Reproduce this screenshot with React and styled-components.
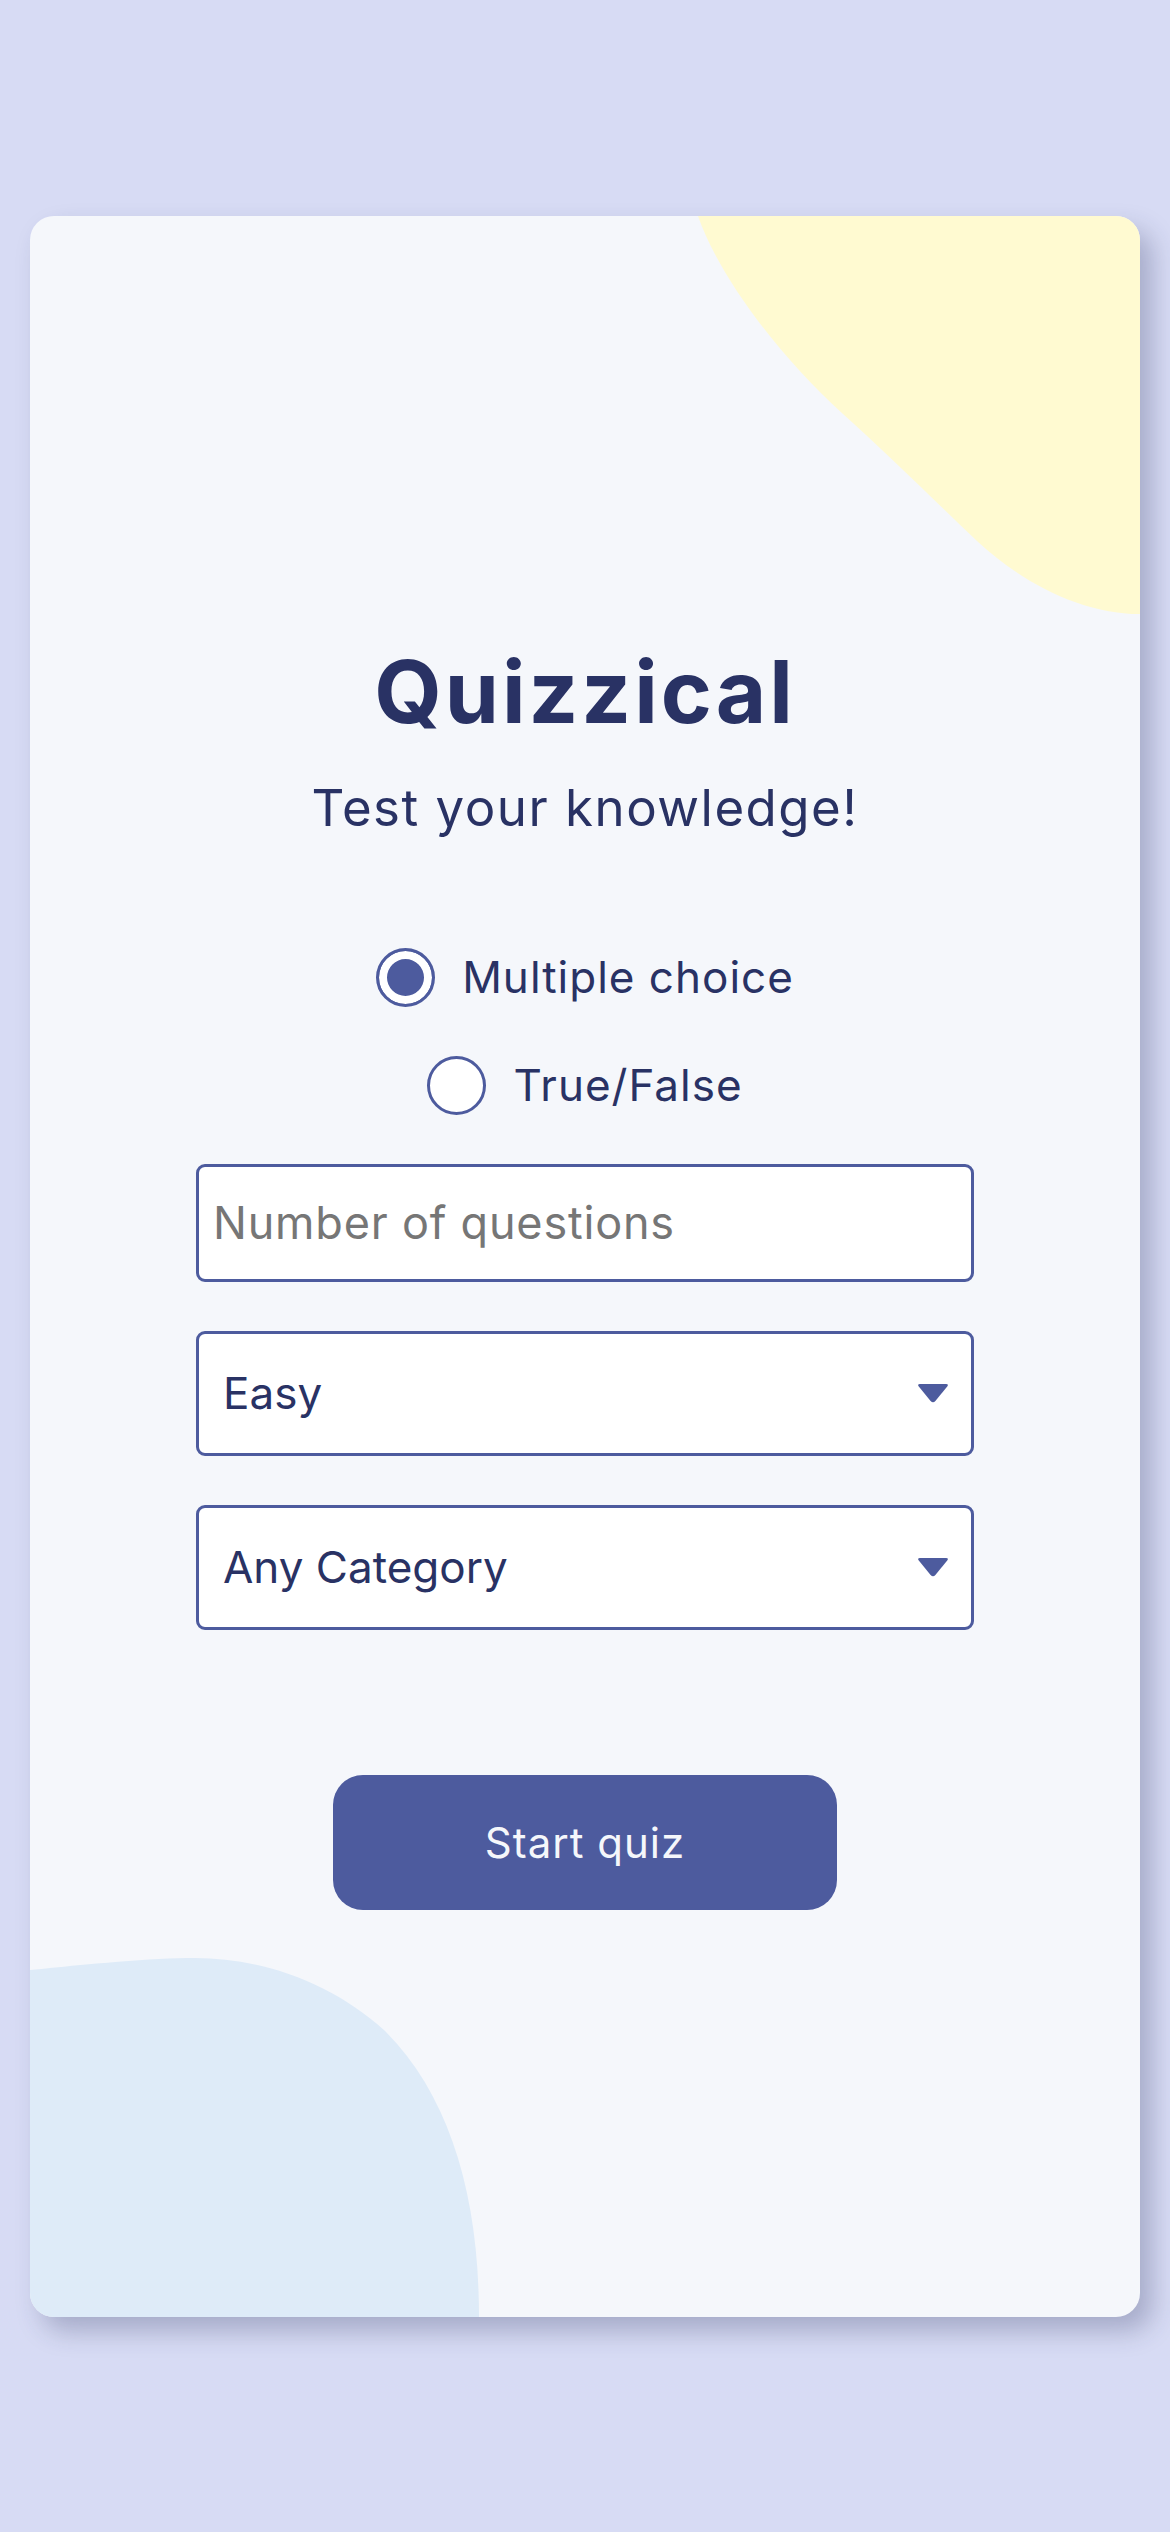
import React, { useState } from 'react';
import styled, { createGlobalStyle } from 'styled-components';

const colors = {
    PAGE: '#D7DBF4',
    CARD: '#F5F7FB',
    NAVY: '#293264',
    ACCENT: '#4D5B9E',
    YELLOW: '#FFFAD1',
    BLUE: '#DEEBF8',
    PLACEHOLDER: '#767676',
    WHITE: '#FFFFFF',
};

const GlobalStyle = createGlobalStyle`
    html, body {
        margin: 0;
        padding: 0;
        background: ${colors.PAGE};
    }
    * {
        box-sizing: border-box;
    }
`;

const Page = styled.div`
    min-height: 2532px;
    display: flex;
    align-items: center;
    justify-content: center;
    font-family: Inter, 'Liberation Sans', sans-serif;
`;

const Card = styled.main`
    position: relative;
    width: 1110px;
    height: 2101px;
    border-radius: 24px;
    background: ${colors.CARD};
    overflow: hidden;
    box-shadow: 12px 14px 26px rgba(40, 46, 90, 0.28);
`;

const Blobs = styled.svg`
    position: absolute;
    inset: 0;
    width: 100%;
    height: 100%;
    pointer-events: none;
`;

const Content = styled.div`
    position: relative;
    display: flex;
    flex-direction: column;
    align-items: center;
    padding-top: 432px;
`;

const Title = styled.h1`
    margin: 0;
    font-size: 87px;
    line-height: 88px;
    font-weight: 700;
    letter-spacing: 3px;
    color: ${colors.NAVY};
`;

const Subtitle = styled.p`
    margin: 46px 0 0;
    font-size: 51px;
    line-height: 52px;
    font-weight: 400;
    letter-spacing: 1.5px;
    color: ${colors.NAVY};
`;

const Form = styled.form`
    width: 778px;
    margin-top: 114px;
    display: flex;
    flex-direction: column;
    align-items: center;
    gap: 49px;
`;

const RadioRow = styled.label`
    height: 59px;
    display: flex;
    align-items: center;
    gap: 27px;
    cursor: pointer;
    font-size: 44px;
    letter-spacing: 1px;
    color: ${colors.NAVY};
`;

const Radio = styled.input.attrs({ type: 'radio' })`
    appearance: none;
    margin: 0;
    width: 59px;
    height: 59px;
    border-radius: 50%;
    border: 3px solid ${colors.ACCENT};
    background: ${colors.WHITE};
    cursor: pointer;

    &:checked {
        background: ${colors.ACCENT};
        box-shadow: inset 0 0 0 8px ${colors.WHITE};
    }
`;

const TextInput = styled.input`
    width: 100%;
    height: 118px;
    margin: 0;
    padding: 0 14px;
    border: 3px solid ${colors.ACCENT};
    border-radius: 9px;
    background: ${colors.WHITE};
    font-family: inherit;
    font-size: 45px;
    letter-spacing: 0.8px;
    color: ${colors.NAVY};
    outline: none;

    &::placeholder {
        color: ${colors.PLACEHOLDER};
    }
`;

const SelectWrap = styled.div`
    position: relative;
    width: 100%;
`;

const Select = styled.select`
    width: 100%;
    height: 125px;
    margin: 0;
    padding: 0 80px 0 24px;
    appearance: none;
    border: 3px solid ${colors.ACCENT};
    border-radius: 9px;
    background: ${colors.WHITE};
    font-family: inherit;
    font-size: 44px;
    color: ${colors.NAVY};
    outline: none;
    cursor: pointer;
`;

const Arrow = styled.svg`
    position: absolute;
    right: 25px;
    top: 50%;
    width: 32px;
    height: 20px;
    transform: translateY(-50%);
    pointer-events: none;
`;

const StartButton = styled.button`
    width: 504px;
    height: 135px;
    margin-top: 96px;
    border: none;
    border-radius: 30px;
    background: ${colors.ACCENT};
    color: ${colors.CARD};
    font-family: inherit;
    font-size: 42px;
    letter-spacing: 1px;
    cursor: pointer;
`;

const DropArrow = () => (
    <Arrow viewBox="0 0 32 20">
        <path
            d="M3 1 H29 Q32 1 30.2 3.6 L18.4 18 Q16 20.6 13.6 18 L1.8 3.6 Q0 1 3 1 Z"
            fill={colors.ACCENT}
        />
    </Arrow>
);

const Dropdown = ({ value, onChange, options }) => (
    <SelectWrap>
        <Select value={value} onChange={e => onChange(e.target.value)}>
            {options.map(option => (
                <option key={option} value={option}>
                    {option}
                </option>
            ))}
        </Select>
        <DropArrow />
    </SelectWrap>
);

const App = () => {
    const [type, setType] = useState('multiple');
    const [difficulty, setDifficulty] = useState('Easy');
    const [category, setCategory] = useState('Any Category');

    return (
        <Page>
            <GlobalStyle />
            <Card>
                <Blobs viewBox="0 0 1110 2101" preserveAspectRatio="none">
                    <path
                        d="M668 0 C689 60, 747 138, 813 198 C860 240, 910 290, 947 325 C990 365, 1050 398, 1110 398 L1110 0 Z"
                        fill={colors.YELLOW}
                    />
                    <path
                        d="M0 1754 C60 1748, 120 1742, 165 1742 C230 1742, 300 1765, 355 1815 C420 1880, 449 1980, 449 2101 L0 2101 Z"
                        fill={colors.BLUE}
                    />
                </Blobs>
                <Content>
                    <Title>Quizzical</Title>
                    <Subtitle>Test your knowledge!</Subtitle>
                    <Form onSubmit={e => e.preventDefault()}>
                        <RadioRow>
                            <Radio
                                name="type"
                                checked={type === 'multiple'}
                                onChange={() => setType('multiple')}
                            />
                            Multiple choice
                        </RadioRow>
                        <RadioRow>
                            <Radio
                                name="type"
                                checked={type === 'boolean'}
                                onChange={() => setType('boolean')}
                            />
                            True/False
                        </RadioRow>
                        <TextInput type="number" placeholder="Number of questions" />
                        <Dropdown
                            value={difficulty}
                            onChange={setDifficulty}
                            options={['Easy', 'Medium', 'Hard']}
                        />
                        <Dropdown
                            value={category}
                            onChange={setCategory}
                            options={['Any Category', 'General Knowledge', 'Books', 'Film', 'Music']}
                        />
                        <StartButton type="submit">Start quiz</StartButton>
                    </Form>
                </Content>
            </Card>
        </Page>
    );
};

export default App;
